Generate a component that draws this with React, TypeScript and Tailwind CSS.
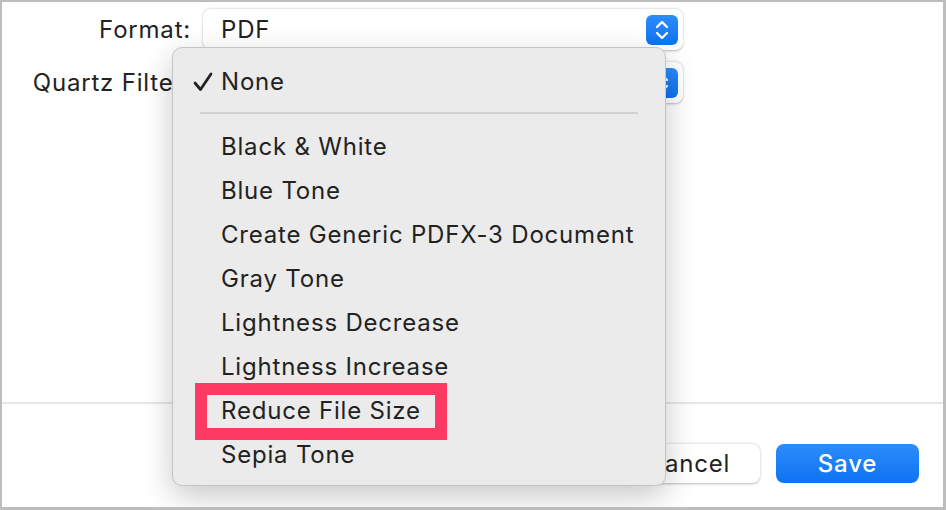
import React from "react";

function Stepper({ className = "" }: { className?: string }) {
  return (
    <div className={"w-[32px] h-[30px] rounded-[6px] bg-gradient-to-b from-[#2b8cfb] to-[#0d73f2] flex items-center justify-center " + className}>
      <svg width="16" height="22" viewBox="0 0 16 22" fill="none">
        <path d="M3 8 L8 3 L13 8" stroke="white" strokeWidth="2.4" strokeLinecap="round" strokeLinejoin="round" />
        <path d="M3 14 L8 19 L13 14" stroke="white" strokeWidth="2.4" strokeLinecap="round" strokeLinejoin="round" />
      </svg>
    </div>
  );
}

function Popup({ value }: { value: string }) {
  return (
    <div className="w-[480px] h-[41px] rounded-[8px] bg-white shadow-[0_0.5px_2.5px_rgba(0,0,0,0.28)] flex items-center pl-[18px] pr-[5px]">
      <span className="flex-1 text-[24px] text-[#222]">{value}</span>
      <Stepper />
    </div>
  );
}

const items = [
  "Black & White",
  "Blue Tone",
  "Create Generic PDFX-3 Document",
  "Gray Tone",
  "Lightness Decrease",
  "Lightness Increase",
  "Reduce File Size",
  "Sepia Tone",
];

export default function App() {
  return (
    <div
      className="relative w-[946px] h-[510px] bg-white border-t-2 border-l-2 border-r-[3px] border-b-[3px] border-[#bdbdbd] overflow-hidden text-[#222] tracking-[0.8px]"
      style={{ fontFamily: "Inter, 'Liberation Sans', sans-serif" }}
    >
      <div className="h-[400px] pt-[7px]">
        <div className="grid grid-cols-[189px_480px] gap-x-[12px] gap-y-[12px] items-center">
          <div className="text-right text-[24px]">Format:</div>
          <Popup value="PDF" />
          <div className="text-right text-[24px] whitespace-nowrap">Quartz Filter:</div>
          <Popup value="None" />
        </div>
      </div>
      <div className="h-[2px] bg-[#e6e6e6]" />
      <div className="flex justify-end gap-[16px] pt-[40px] pr-[24px]">
        <div className="w-[143px] h-[39px] rounded-[8px] bg-white shadow-[0_0.5px_2.5px_rgba(0,0,0,0.28)] flex items-center justify-center text-[24px]">
          Cancel
        </div>
        <div className="w-[143px] h-[39px] rounded-[8px] bg-gradient-to-b from-[#2b8cfb] to-[#0d73f2] flex items-center justify-center text-[24px] text-white font-medium">
          Save
        </div>
      </div>

      <div className="absolute left-[170px] top-[45px] w-[494px] h-[439px] rounded-[10px] bg-[#ebebeb] border border-[#c4c4c4] shadow-[0_10px_30px_rgba(0,0,0,0.22)] pt-[12px] pb-[9px]">
        <div className="h-[44px] flex items-center text-[24px]">
          <div className="w-[48px] pl-[20px] flex items-center">
            <svg width="20" height="20" viewBox="0 0 20 20" fill="none">
              <path d="M2 11 L7.5 17.5 L18 2" stroke="#222" strokeWidth="2.8" strokeLinecap="round" strokeLinejoin="round" />
            </svg>
          </div>
          <span>None</span>
        </div>
        <div className="pt-[8px] pb-[11px] px-[27px]">
          <div className="h-[2px] bg-[#d2d2d2]" />
        </div>
        {items.map((it) => (
          <div key={it} className="relative h-[44px] flex items-center pl-[48px] text-[24px]">
            {it}
            {it === "Reduce File Size" && (
              <div className="absolute left-[22px] top-[-6px] w-[252px] h-[57px] border-[12px] border-[#fd3a64]" />
            )}
          </div>
        ))}
      </div>
    </div>
  );
}
